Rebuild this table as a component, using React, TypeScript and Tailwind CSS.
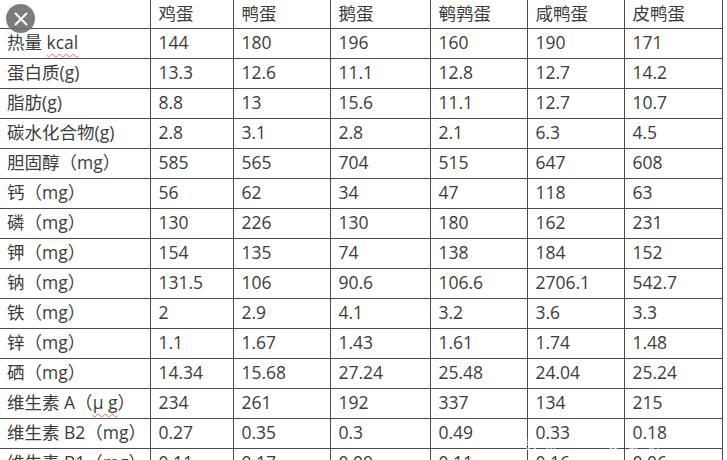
const header = ['', '鸡蛋', '鸭蛋', '鹅蛋', '鹌鹑蛋', '咸鸭蛋', '皮鸭蛋']

const rows: { label: React.ReactNode; values: string[] }[] = [
  {
    label: (
      <>
        热量 <span className="underline decoration-wavy decoration-red-400 decoration-1 underline-offset-4">kcal</span>
      </>
    ),
    values: ['144', '180', '196', '160', '190', '171'],
  },
  { label: '蛋白质(g)', values: ['13.3', '12.6', '11.1', '12.8', '12.7', '14.2'] },
  { label: '脂肪(g)', values: ['8.8', '13', '15.6', '11.1', '12.7', '10.7'] },
  { label: '碳水化合物(g)', values: ['2.8', '3.1', '2.8', '2.1', '6.3', '4.5'] },
  { label: '胆固醇（mg）', values: ['585', '565', '704', '515', '647', '608'] },
  { label: '钙（mg）', values: ['56', '62', '34', '47', '118', '63'] },
  { label: '磷（mg）', values: ['130', '226', '130', '180', '162', '231'] },
  { label: '钾（mg）', values: ['154', '135', '74', '138', '184', '152'] },
  { label: '钠（mg）', values: ['131.5', '106', '90.6', '106.6', '2706.1', '542.7'] },
  { label: '铁（mg）', values: ['2', '2.9', '4.1', '3.2', '3.6', '3.3'] },
  { label: '锌（mg）', values: ['1.1', '1.67', '1.43', '1.61', '1.74', '1.48'] },
  { label: '硒（mg）', values: ['14.34', '15.68', '27.24', '25.48', '24.04', '25.24'] },
  {
    label: (
      <>
        维生素 A（
        <span className="underline decoration-wavy decoration-red-400 decoration-1 underline-offset-4">μ g</span>）
      </>
    ),
    values: ['234', '261', '192', '337', '134', '215'],
  },
  { label: '维生素 B2（mg）', values: ['0.27', '0.35', '0.3', '0.49', '0.33', '0.18'] },
  { label: '维生素 B1（mg）', values: ['0.11', '0.17', '0.09', '0.11', '0.16', '0.06'] },
]

const widths = [150, 83, 97, 100, 97, 97, 98]

export default function App() {
  return (
    <div
      className="relative w-[727px] h-[460px] overflow-hidden bg-white text-[#3c3c3c]"
      style={{ fontFamily: '"Open Sans", "Noto Sans CJK SC", sans-serif' }}
    >
      <table className="table-fixed border-collapse text-[17.5px] leading-none">
        <colgroup>
          {widths.map((w, i) => (
            <col key={i} style={{ width: w }} />
          ))}
        </colgroup>
        <thead>
          <tr className="h-[28px]">
            {header.map((h, i) => (
              <th
                key={i}
                className="border-b-[1.5px] border-r-[1.5px] border-[#4a4a4a] pl-[8px] text-left font-normal"
              >
                {h}
              </th>
            ))}
          </tr>
        </thead>
        <tbody>
          {rows.map((row, r) => (
            <tr key={r} className="h-[30px]">
              <td className="border-b-[1.5px] border-r-[1.5px] border-[#4a4a4a] pl-[7px] whitespace-nowrap">
                {row.label}
              </td>
              {row.values.map((v, i) => (
                <td key={i} className="border-b-[1.5px] border-r-[1.5px] border-[#4a4a4a] pl-[8px]">
                  {v}
                </td>
              ))}
            </tr>
          ))}
        </tbody>
      </table>

      {/* close button */}
      <div className="absolute left-[6px] top-[4px] flex h-[29px] w-[29px] items-center justify-center rounded-full bg-[#6e6e6e]/90">
        <svg width="14" height="14" viewBox="0 0 14 14">
          <path d="M1.5 1.5 L12.5 12.5 M12.5 1.5 L1.5 12.5" stroke="white" strokeWidth="2" strokeLinecap="round" />
        </svg>
      </div>

      {/* watermark */}
      <div className="absolute left-[525px] top-[439px] text-[12px] leading-none tracking-[8px] text-white/90">
        头条 一 美食记
      </div>
    </div>
  )
}
